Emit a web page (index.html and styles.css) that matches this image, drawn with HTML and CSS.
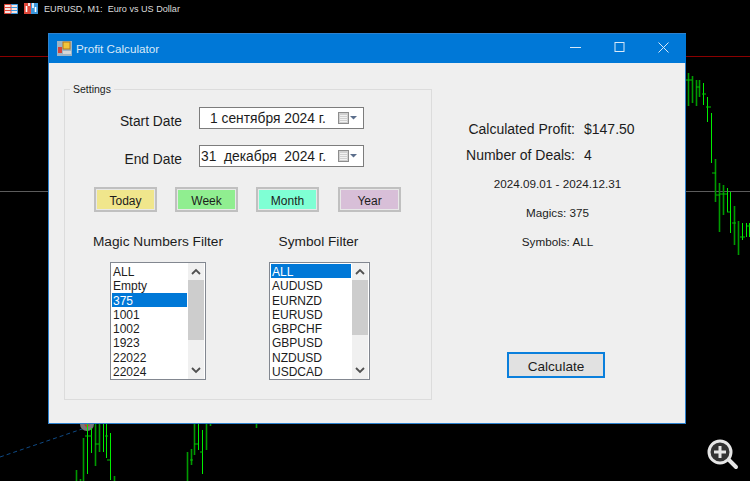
FILE: index.html
```html
<!DOCTYPE html>
<html lang="en">
<head>
<meta charset="utf-8">
<title>Profit Calculator</title>
<link rel="stylesheet" href="styles.css">
</head>
<body>
<div class="desktop">
  <svg class="chart" width="750" height="481" viewBox="0 0 750 481">
    <line class="level-red" x1="0" y1="56.5" x2="750" y2="56.5"/>
    <line class="level-grey" x1="0" y1="191.5" x2="750" y2="191.5"/>
    <path class="trend" d="M0 457 L85 428"/>
    <circle class="marker" cx="87" cy="424" r="7"/>
    <path class="marker-dot" d="M84 424.5 L90 424.5 L87 428 Z"/>
    <path class="bar-dark" d="M688.5 73V106M692.5 76V103M696.5 80V106M699.5 80V97M715.5 159V202M719.5 183V232M723.5 185V215M734.5 206V245M738.5 221V255M76.5 470V481M83.5 438V481M95.5 424V466M99.5 424V452M187.5 452V481M191.5 449V465M194.5 424V455M206.5 424V450M210.5 424V426M256.5 424V428M80.5 479V481M114.5 476V481"/>
    <path class="bar-bright" d="M703.5 83V105M707.5 97V122M711.5 113V163M727.5 188V212M730.5 192V233M742.5 223V240M746.5 223V237M749.5 223V237M87.5 424V474M91.5 428V453M103.5 424V452M106.5 424V458M110.5 433V480M198.5 424V450M202.5 430V474"/>
    <path class="bar-tick" d="M686 80H692M696 87H700M702 94H706M706 107H711M712 173H716M716 195H720M720 194H727M727 212H730M732 223H736M740 237H745M747 226H750M85 436H88M88 436H92M95 444H99M105 436H108M107 460H110M190 460H193M194 444H198M200 452H203"/>
    <g class="zoom-icon">
      <circle class="zoom-ring" cx="720" cy="452" r="11"/>
      <path class="zoom-plus" d="M720 446V458M714 452H726"/>
      <path class="zoom-handle" d="M729 460L736 467"/>
    </g>
  </svg>

  <header class="chart-header">
    <svg class="chart-icon" width="14" height="10" viewBox="0 0 14 10">
      <rect class="ic-pale" x="0.5" y="0.5" width="13" height="9"/>
      <path class="ic-red-line" d="M0.5 0.5H7V9.5H0.5ZM1 3.5H7M1 6.5H7"/>
      <path class="ic-blue-line" d="M7 0.5H13.5V9.5H7M7 3.5H13M7 6.5H13"/>
    </svg>
    <svg class="chart-icon" width="14" height="11" viewBox="0 0 14 11">
      <rect class="ic-fill-red" x="0" y="0" width="7" height="11"/>
      <rect class="ic-fill-blue" x="7" y="0" width="7" height="11"/>
      <path class="ic-white" d="M2.5 3V9M5 0V3M9 0V5M11.5 4V9"/>
    </svg>
    <span class="chart-title">EURUSD, M1:&nbsp; Euro vs US Dollar</span>
  </header>

  <main class="window">
    <div class="titlebar">
      <svg class="app-icon" width="15" height="15" viewBox="0 0 15 15">
        <rect x="0" y="0" width="15" height="15" class="app-bg"/>
        <rect x="6" y="1" width="7" height="7" class="app-yellow"/>
        <rect x="1" y="6" width="4" height="6" class="app-red"/>
        <rect x="6" y="10" width="8" height="3" class="app-grey"/>
      </svg>
      <span class="window-title">Profit Calculator</span>
      <div class="window-controls">
        <svg class="ctl ctl-min" width="11" height="11" viewBox="0 0 11 11"><path d="M0 5.5H11"/></svg>
        <svg class="ctl ctl-max" width="11" height="11" viewBox="0 0 11 11"><rect x="1" y="0.5" width="9" height="9"/></svg>
        <svg class="ctl ctl-close" width="11" height="11" viewBox="0 0 11 11"><path d="M0.5 0.5L10.5 10.5M10.5 0.5L0.5 10.5"/></svg>
      </div>
    </div>

    <div class="client">
      <fieldset class="settings">
        <legend class="settings-legend">Settings</legend>

        <div class="date-grid">
          <label class="field-label">Start Date</label>
          <div class="date-picker">
            <span class="date-text date-text-start">1 сентября 2024 г.</span>
            <svg class="cal" width="21" height="12" viewBox="0 0 21 12">
              <rect class="cal-page" x="1.5" y="0.5" width="10" height="11"/>
              <path class="cal-lines" d="M3 3.5H10M3 5.5H10M3 7.5H10M3 9.5H10"/>
              <path class="cal-arrow" d="M13 4H20L16.5 7.5Z"/>
            </svg>
          </div>
          <label class="field-label">End Date</label>
          <div class="date-picker">
            <span class="date-text date-text-end">31&nbsp; декабря&nbsp; 2024 г.</span>
            <svg class="cal" width="21" height="12" viewBox="0 0 21 12">
              <rect class="cal-page" x="1.5" y="0.5" width="10" height="11"/>
              <path class="cal-lines" d="M3 3.5H10M3 5.5H10M3 7.5H10M3 9.5H10"/>
              <path class="cal-arrow" d="M13 4H20L16.5 7.5Z"/>
            </svg>
          </div>
        </div>

        <div class="range-buttons">
          <button class="range-btn range-today">Today</button>
          <button class="range-btn range-week">Week</button>
          <button class="range-btn range-month">Month</button>
          <button class="range-btn range-year">Year</button>
        </div>

        <div class="filters">
          <section class="filter filter-magic">
            <h2 class="filter-title">Magic Numbers Filter</h2>
            <div class="listbox">
              <ul class="list-items">
                <li>ALL</li><li>Empty</li><li class="selected">375</li><li>1001</li><li>1002</li><li>1923</li><li>22022</li><li>22024</li>
              </ul>
              <div class="scrollbar">
                <svg class="chev" width="16" height="17" viewBox="0 0 16 17"><path d="M4 11L8 7L12 11"/></svg>
                <div class="thumb thumb-magic"></div>
                <div class="track"></div>
                <svg class="chev" width="16" height="17" viewBox="0 0 16 17"><path d="M4 6L8 10L12 6"/></svg>
              </div>
            </div>
          </section>
          <section class="filter filter-symbol">
            <h2 class="filter-title">Symbol Filter</h2>
            <div class="listbox">
              <ul class="list-items">
                <li class="selected">ALL</li><li>AUDUSD</li><li>EURNZD</li><li>EURUSD</li><li>GBPCHF</li><li>GBPUSD</li><li>NZDUSD</li><li>USDCAD</li>
              </ul>
              <div class="scrollbar">
                <svg class="chev" width="16" height="17" viewBox="0 0 16 17"><path d="M4 11L8 7L12 11"/></svg>
                <div class="thumb thumb-symbol"></div>
                <div class="track"></div>
                <svg class="chev" width="16" height="17" viewBox="0 0 16 17"><path d="M4 6L8 10L12 6"/></svg>
              </div>
            </div>
          </section>
        </div>
      </fieldset>

      <section class="results">
        <dl class="summary">
          <dt>Calculated Profit:</dt><dd>$147.50</dd>
          <dt>Number of Deals:</dt><dd>4</dd>
        </dl>
        <p class="note">2024.09.01 - 2024.12.31</p>
        <p class="note">Magics: 375</p>
        <p class="note">Symbols: ALL</p>
        <button class="calculate">Calculate</button>
      </section>
    </div>
  </main>
</div>
</body>
</html>
```

FILE: styles.css
```css
* { box-sizing: border-box; }
html, body { margin: 0; padding: 0; background: #000; }
body { font-family: "Liberation Sans", Arial, sans-serif; color: #1c1c1c; }

.desktop { position: relative; width: 750px; height: 481px; overflow: hidden; background: #000; }

/* chart backdrop */
.chart { position: absolute; left: 0; top: 0; }
.level-red { stroke: #8b0000; stroke-width: 1; }
.level-grey { stroke: #5c5c5c; stroke-width: 1; }
.trend { stroke: #0f4a85; stroke-width: 1; stroke-dasharray: 4 3; fill: none; }
.marker { fill: #777; }
.marker-dot { fill: #c0392b; }
.bar-dark { stroke: #009a00; stroke-width: 1.6; fill: none; }
.bar-bright { stroke: #00ee00; stroke-width: 1; fill: none; }
.bar-tick { stroke: #00c000; stroke-width: 1; fill: none; }
.zoom-ring { fill: #333; stroke: #e6e6e6; stroke-width: 3; }
.zoom-plus { stroke: #e6e6e6; stroke-width: 3; fill: none; }
.zoom-handle { stroke: #e6e6e6; stroke-width: 4; stroke-linecap: round; fill: none; }

.chart-header { position: relative; display: flex; align-items: center; height: 17px; padding: 0 0 0 4px; }
.chart-icon { flex: none; margin-right: 6px; }
.ic-pale { fill: #f6e4e2; }
.ic-red-line { stroke: #e0483a; stroke-width: 1; fill: none; }
.ic-blue-line { stroke: #3b97dc; stroke-width: 1; fill: none; }
.ic-fill-red { fill: #e0483a; }
.ic-fill-blue { fill: #3b97dc; }
.ic-white { stroke: #fff; stroke-width: 1.6; fill: none; }
.chart-title { color: #dcdcdc; font-size: 9.1px; white-space: nowrap; }

/* window */
.window { position: absolute; left: 48px; top: 33px; width: 638px; height: 391px; display: flex; flex-direction: column; background: #efefef; border: 1px solid #2d82cf; }
.titlebar { flex: none; height: 29px; display: flex; align-items: center; background: #0078d7; padding-left: 8px; margin: 0 -1px 0 0; }
.app-bg { fill: #9db4c6; }
.app-yellow { fill: #f2c53c; stroke: #b4781c; stroke-width: 1; }
.app-red { fill: #d8453a; }
.app-grey { fill: #d6d6d6; }
.app-icon { flex: none; margin-top: -1px; }
.window-title { margin-left: 4px; color: #d9e9f8; font-size: 11.7px; }
.window-controls { margin-left: auto; display: flex; align-items: center; gap: 33px; padding-right: 17px; margin-top: -2px; }
.ctl { fill: none; stroke: #d9e9f8; stroke-width: 1; }

.client { flex: 1; display: flex; align-items: flex-start; }

/* settings group */
.settings { width: 368px; height: 317px; margin: 20px 0 0 15px; padding: 12px 0 0 29px; border: 1px solid #dcdcdc; min-inline-size: 0; }
.settings-legend { padding: 0 3px; margin-left: -24px; font-size: 10.5px; line-height: 12px; }

.date-grid { display: grid; grid-template-columns: 89px 165px; grid-auto-rows: 22px; column-gap: 16px; row-gap: 16px; }
.field-label { align-self: center; text-align: right; font-size: 13.8px; line-height: 16px; padding: 7px 1px 0 0; }
.date-picker { display: flex; align-items: center; height: 22px; background: #fff; border: 1px solid #7c7c7c; position: relative; }
.date-text { font-size: 13.8px; white-space: nowrap; }
.date-text-start { margin-left: 10px; }
.date-text-end { margin-left: 1px; }
.cal { margin-left: auto; margin-right: 5px; flex: none; }
.cal-page { fill: #d0d0d0; stroke: #8d8d8d; }
.cal-lines { stroke: #f2f2f2; stroke-width: 1; fill: none; }
.cal-arrow { fill: #5c6f8c; }

.range-buttons { display: flex; gap: 18px; margin-top: 20px; }
.range-btn { width: 63px; height: 25px; padding: 2px 0 0; font-family: inherit; font-size: 12px; color: #1c1c1c; border: 2px solid #c0c0c0; box-shadow: inset 0 0 0 1px #e8e8e8; }
.range-today { background: #f0e68c; }
.range-week { background: #90ee90; }
.range-month { background: #7fffd4; }
.range-year { background: #d8bfd8; margin-left: 1px; }

.filters { display: flex; gap: 63px; margin-top: 22px; padding-left: 16px; }
.filter { display: flex; flex-direction: column; align-items: center; }
.filter-magic { width: 96px; }
.filter-symbol { width: 101px; }
.filter-title { margin: 0 0 12px; height: 16px; font-weight: normal; font-size: 13.7px; line-height: 16px; white-space: nowrap; }
.filter-symbol .filter-title { margin-right: 2px; }
.listbox { width: 100%; height: 118px; display: flex; background: #fff; border: 1px solid #828790; }
.list-items { flex: 1; min-width: 0; list-style: none; margin: 0; padding: 1px 0 0 1px; font-size: 12px; line-height: 14.3px; }
.list-items li { height: 14.3px; padding: 1px 0 0 1px; white-space: nowrap; }
.list-items .selected { background: #0078d7; color: #fff; }
.scrollbar { flex: none; width: 16px; margin: 0 1px 0 1px; display: flex; flex-direction: column; background: #f0f0f0; }
.chev { flex: none; fill: none; stroke: #505050; stroke-width: 1.8; }
.thumb { flex: none; background: #cdcdcd; }
.thumb-magic { height: 60px; }
.thumb-symbol { height: 55px; }
.track { flex: 1; }

/* results */
.results { width: 235px; margin-left: 8px; padding-top: 53px; display: flex; flex-direction: column; }
.summary { display: grid; grid-template-columns: 135px auto; column-gap: 9px; grid-auto-rows: 26px; margin: 0; font-size: 14px; line-height: 26px; }
.summary dt { text-align: right; white-space: nowrap; }
.summary dd { margin: 0; }
.note { margin: 0; height: 29px; line-height: 29px; font-size: 11.7px; text-align: center; }
.summary + .note { margin-top: 1px; }
.calculate { width: 98px; height: 26px; margin: 96px 0 0 67px; padding: 2px 0 0; font-family: inherit; font-size: 13.6px; color: #1c1c1c; background: #e1e1e1; border: 2px solid #0a7fdc; }
```
